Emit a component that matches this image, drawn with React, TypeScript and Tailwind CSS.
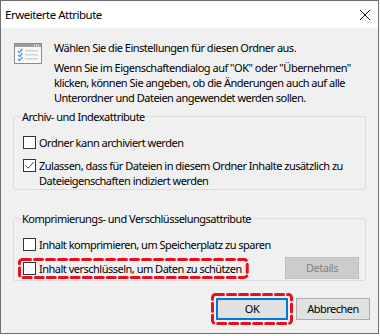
import { ReactNode } from "react";

const font = { fontFamily: '"Segoe UI", "Noto Sans", Arial, sans-serif' };

// red dashed annotation drawn over a wrapped element
const Dashed = ({ children, className }: { children: ReactNode; className?: string }) => (
  <div className={`relative ${className ?? ""}`}>
    {children}
    <svg className="absolute inset-0 h-full w-full pointer-events-none overflow-visible">
      <rect
        x="1.5"
        y="1.5"
        width="calc(100% - 3px)"
        height="calc(100% - 3px)"
        rx="3"
        fill="none"
        stroke="#e8101e"
        strokeWidth="3"
        strokeDasharray="8 4"
        strokeLinecap="round"
      />
    </svg>
  </div>
);

const Checkbox = ({ checked }: { checked?: boolean }) => (
  <span className="mt-[1px] flex h-[13px] w-[13px] shrink-0 items-center justify-center border border-[#333333] bg-white">
    {checked && (
      <svg width="11" height="11" viewBox="0 0 11 11">
        <path d="M1.5 5.5 L4.2 8.2 L9.5 2.2" fill="none" stroke="#444" strokeWidth="1" />
      </svg>
    )}
  </span>
);

const Group = ({ title, children, className }: { title: string; children: ReactNode; className?: string }) => (
  <fieldset className={`mx-[12px] rounded-[2px] border border-[#dcdcdc] px-[9px] ${className ?? ""}`}>
    <legend className="ml-[-2px] px-[1px] leading-[15px]">{title}</legend>
    {children}
  </fieldset>
);

const FolderIcon = () => (
  <svg width="28" height="21" viewBox="0 0 28 21">
    <rect x="0.5" y="0.5" width="27" height="20" fill="#f9f9f9" stroke="#8c8c8c" />
    <rect x="1" y="1" width="26" height="3" fill="#9c9c9c" />
    <rect x="20" y="1.5" width="1" height="2" fill="#e6e6e6" />
    <rect x="22" y="1.5" width="1" height="2" fill="#e6e6e6" />
    <rect x="24" y="1.5" width="1" height="2" fill="#e6e6e6" />
    <g fill="none" stroke="#4a9be3" strokeWidth="1.2">
      <path d="M4 8 L5.5 9.5 L8.5 6" />
      <path d="M4 12 L5.5 13.5 L8.5 10" />
      <path d="M4 16 L5.5 17.5 L8.5 14" />
    </g>
    <g fill="#d3d3d3">
      <rect x="11" y="7" width="13" height="1.5" />
      <rect x="11" y="11" width="13" height="1.5" />
      <rect x="11" y="15" width="13" height="1.5" />
    </g>
  </svg>
);

export default function App() {
  return (
    <div
      className="h-[336px] w-[380px] whitespace-nowrap bg-white text-[11px] tracking-[-0.5px] text-black"
      style={font}
    >
      <div className="flex h-[334px] w-[379px] flex-col border border-[#6e6e6e] bg-[#f0f0f0]">
        {/* Titelleiste */}
        <div className="flex h-[27px] items-center justify-between bg-white pl-[4px] pr-[8px]">
          <span className="text-[11.5px]">Erweiterte Attribute</span>
          <svg width="10" height="10" viewBox="0 0 10 10">
            <path d="M0 0 L10 10 M10 0 L0 10" stroke="#111" strokeWidth="1" />
          </svg>
        </div>

        {/* Hinweis */}
        <div className="flex pt-[12px] leading-[15px]">
          <div className="ml-[13px] mt-[3px] w-[40px] shrink-0">
            <FolderIcon />
          </div>
          <div>
            <p>Wählen Sie die Einstellungen für diesen Ordner aus.</p>
            <p className="mt-[5px]">
              Wenn Sie im Eigenschaftendialog auf "OK" oder "Übernehmen"
              <br />
              klicken, können Sie angeben, ob die Änderungen auch auf alle
              <br />
              Unterordner und Dateien angewendet werden sollen.
            </p>
          </div>
        </div>

        <Group title="Archiv- und Indexattribute" className="mt-[4px] pb-[1px] pt-[11px]">
          <label className="flex gap-[3px] leading-[15px]">
            <Checkbox />
            <span>Ordner kann archiviert werden</span>
          </label>
          <label className="mt-[8px] flex gap-[3px] leading-[15px]">
            <Checkbox checked />
            <span>
              Zulassen, dass für Dateien in diesem Ordner Inhalte zusätzlich zu
              <br />
              Dateieigenschaften indiziert werden
            </span>
          </label>
        </Group>

        <Group title="Komprimierungs- und Verschlüsselungsattribute" className="mt-[21px] pb-[1px] pt-[11px]">
          <label className="flex gap-[3px] leading-[15px]">
            <Checkbox />
            <span>Inhalt komprimieren, um Speicherplatz zu sparen</span>
          </label>
          <div className="mt-[5px] flex items-center justify-between">
            <Dashed className="ml-[-5px] py-[3px] pl-[5px] pr-[7px]">
              <label className="flex gap-[3px] leading-[15px]">
                <Checkbox />
                <span>Inhalt verschlüsseln, um Daten zu schützen</span>
              </label>
            </Dashed>
            <button
              disabled
              className="mr-[-3px] h-[22px] w-[74px] border border-[#bfbfbf] bg-[#cccccc] text-[#838383]"
            >
              Details
            </button>
          </div>
        </Group>

        {/* Schaltflächen */}
        <div className="mt-[12px] flex justify-end gap-[3px] pr-[8px]">
          <Dashed className="p-[5px]">
            <button className="h-[22px] w-[72px] border-2 border-[#0078d7] bg-[#e1e1e1]">OK</button>
          </Dashed>
          <div className="pt-[5px]">
            <button className="h-[22px] w-[74px] border border-[#adadad] bg-[#e1e1e1]">Abbrechen</button>
          </div>
        </div>
      </div>
    </div>
  );
}
